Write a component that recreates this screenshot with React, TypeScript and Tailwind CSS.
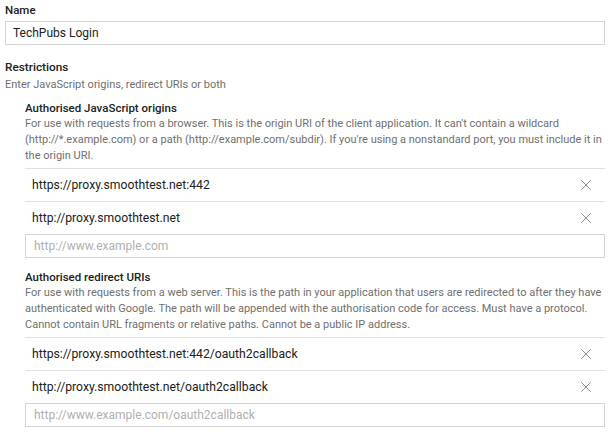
import { X } from "lucide-react"

const font = { fontFamily: "Roboto, 'Liberation Sans', sans-serif" }

function UriRow({ value }: { value: string }) {
  return (
    <div className="flex h-[33px] items-center justify-between border-t border-[#e0e0e0] pl-[7px] pr-[10px]">
      <span className="text-[12.2px] text-[#212121]">{value}</span>
      <X className="h-[18px] w-[18px] text-[#8a8a8a]" strokeWidth={1.3} />
    </div>
  )
}

function UriSection({
  title,
  description,
  values,
  placeholder,
}: {
  title: string
  description: string
  values: string[]
  placeholder: string
}) {
  return (
    <div>
      <h3 className="text-[11.5px] font-medium leading-[15px] text-[#212121]">{title}</h3>
      <p className="text-[11px] leading-[16px] text-[#6f6f6f]">{description}</p>
      <div className="mt-[4px]">
        {values.map((v) => (
          <UriRow key={v} value={v} />
        ))}
      </div>
      <input
        className="block h-[24px] w-full border border-[#d4d4d4] px-[8px] text-[12px] text-[#212121] outline-none placeholder:text-[#b0b0b0]"
        placeholder={placeholder}
      />
    </div>
  )
}

export default function App() {
  return (
    <div className="min-h-screen bg-white px-[5px] pt-[3px]" style={font}>
      <label className="block text-[11.5px] font-medium leading-[15px] text-[#212121]">Name</label>
      <input
        className="mt-[3px] block h-[24px] w-[600px] border border-[#d4d4d4] pl-[7px] text-[12px] text-[#212121] outline-none"
        defaultValue="TechPubs Login"
      />

      <h2 className="mt-[15px] text-[11.8px] font-medium leading-[15px] text-[#212121]">Restrictions</h2>
      <p className="mt-[2px] text-[11px] leading-[16px] text-[#6f6f6f]">
        Enter JavaScript origins, redirect URIs or both
      </p>

      <div className="ml-[20px] mt-[8px] w-[580px]">
        <UriSection
          title="Authorised JavaScript origins"
          description="For use with requests from a browser. This is the origin URI of the client application. It can't contain a wildcard (http://*.example.com) or a path (http://example.com/subdir). If you're using a nonstandard port, you must include it in the origin URI."
          values={["https://proxy.smoothtest.net:442", "http://proxy.smoothtest.net"]}
          placeholder="http://www.example.com"
        />
        <div className="mt-[12px]">
          <UriSection
            title="Authorised redirect URIs"
            description="For use with requests from a web server. This is the path in your application that users are redirected to after they have authenticated with Google. The path will be appended with the authorisation code for access. Must have a protocol. Cannot contain URL fragments or relative paths. Cannot be a public IP address."
            values={["https://proxy.smoothtest.net:442/oauth2callback", "http://proxy.smoothtest.net/oauth2callback"]}
            placeholder="http://www.example.com/oauth2callback"
          />
        </div>
      </div>
    </div>
  )
}
